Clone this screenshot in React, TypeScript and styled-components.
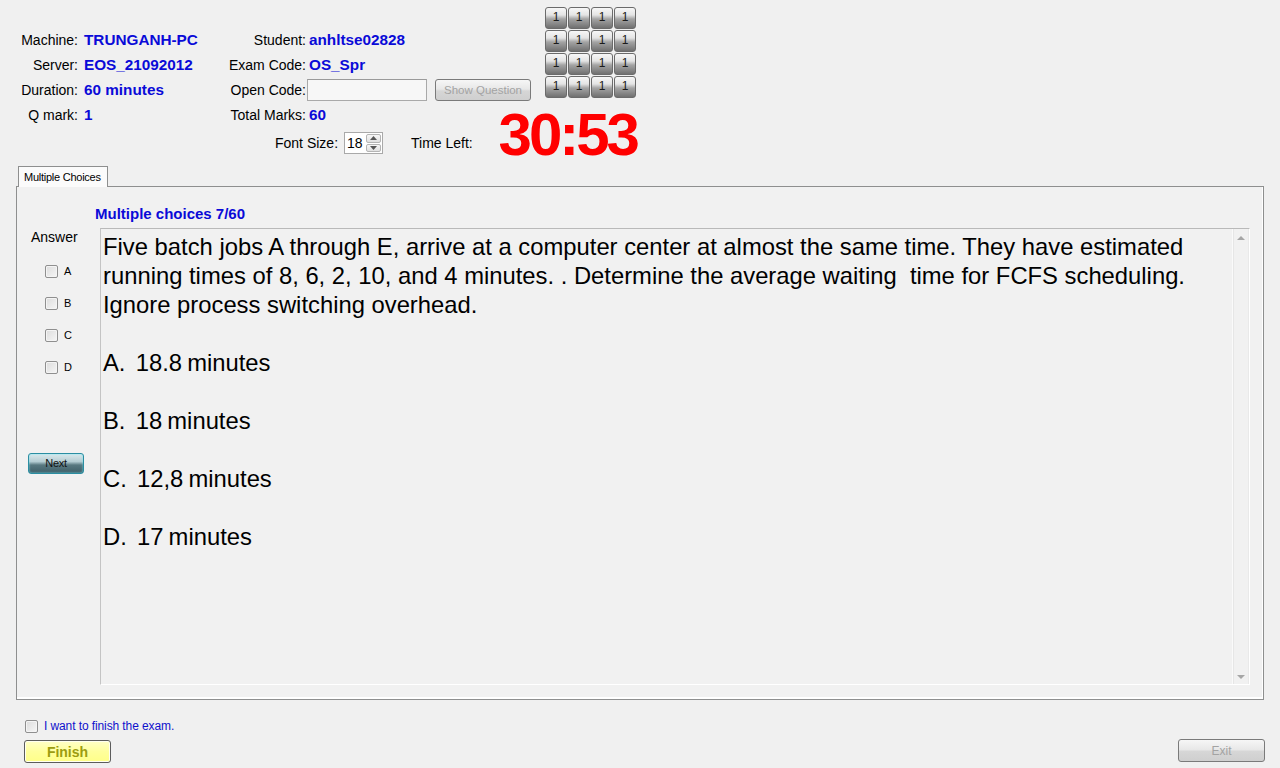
import React from "react";
import styled, { createGlobalStyle } from "styled-components";

const Global = createGlobalStyle`
  html, body { margin: 0; padding: 0; background: #f0f0f0; }
  body { font-family: "Liberation Sans", Arial, sans-serif; color: #000; }
`;

const Page = styled.div`
  width: 1280px;
  height: 768px;
  background: #f0f0f0;
  overflow: hidden;
  display: flex;
  flex-direction: column;
`;

const Header = styled.div`
  display: grid;
  grid-template-columns: 227px 273px 45px 92px;
  grid-template-rows: 20px repeat(4, 25px) 39px;
  padding-top: 7px;
  height: 159px;
`;

const Cell = styled.div<{ $col: string; $row: string }>`
  grid-column: ${(p) => p.$col};
  grid-row: ${(p) => p.$row};
  display: flex;
  align-items: center;
`;

const Label = styled.span<{ $w: number }>`
  width: ${(p) => p.$w}px;
  text-align: right;
  font-size: 14px;
  white-space: nowrap;
`;

const Value = styled.span<{ $gap: number }>`
  margin-left: ${(p) => p.$gap}px;
  font-size: 15.3px;
  font-weight: bold;
  color: #0a0ad8;
  white-space: nowrap;
`;

const TextInput = styled.div`
  margin-left: 1px;
  width: 118px;
  height: 20px;
  background: #f7f7f7;
  border: 1px solid #a9a9a9;
  border-top-color: #9a9a9a;
`;

const GrayButton = styled.div<{ $w: number; $h: number }>`
  width: ${(p) => p.$w}px;
  height: ${(p) => p.$h}px;
  box-sizing: border-box;
  border: 1px solid #7a7a7a;
  border-radius: 3px;
  background: linear-gradient(#f6f6f6 0%, #e8e8e8 45%, #d6d6d6 55%, #cfcfcf 100%);
  color: #a3a3a3;
  font-size: 11.5px;
  display: flex;
  align-items: center;
  justify-content: center;
`;

const ShowQuestion = styled(GrayButton)`
  margin-left: 8px;
  margin-top: 1px;
`;

const NumGrid = styled.div`
  grid-column: 4;
  grid-row: 1 / 5;
  display: grid;
  grid-template-columns: repeat(4, 22px);
  grid-auto-rows: 22px;
  gap: 1px;
  align-self: start;
`;

const NumButton = styled.div`
  box-sizing: border-box;
  border: 1px solid #6b6b6b;
  border-radius: 3px;
  background: linear-gradient(#f7f7f7 0%, #e4e4e4 35%, #a4a4a4 55%, #707070 100%);
  font-size: 12px;
  color: #1a1a1a;
  display: flex;
  align-items: center;
  justify-content: center;
  padding-bottom: 2px;
`;

const Timer = styled.div`
  grid-column: 3 / 5;
  grid-row: 5 / 7;
  justify-self: end;
  align-self: start;
  margin-top: 3px;
  font-size: 60px;
  line-height: 60px;
  font-weight: bold;
  color: #ff0000;
  letter-spacing: -3px;
`;

const FontRow = styled.div`
  grid-column: 1 / 3;
  grid-row: 6;
  display: flex;
  align-items: center;
  padding-left: 275px;
  height: 28px;
  margin-top: 2px;
  font-size: 14px;
`;

const Spinner = styled.div`
  margin-left: 6px;
  width: 39px;
  height: 22px;
  box-sizing: border-box;
  background: #fff;
  border: 1px solid #a9a9a9;
  display: flex;
  align-items: center;
  justify-content: space-between;
`;

const SpinValue = styled.span`
  padding-left: 2px;
  font-size: 14px;
`;

const SpinArrows = styled.div`
  width: 15px;
  height: 18px;
  margin-right: 1px;
  display: flex;
  flex-direction: column;
  gap: 1px;
`;

const SpinArrow = styled.div`
  flex: 1;
  border: 1px solid #b4b4b4;
  border-radius: 2px;
  background: linear-gradient(#f6f6f6, #e0e0e0);
  display: flex;
  align-items: center;
  justify-content: center;
`;

const TimeLeft = styled.span`
  margin-left: 28px;
`;

const TabStrip = styled.div`
  display: flex;
  padding-left: 18px;
  height: 20px;
`;

const Tab = styled.div`
  width: 90px;
  box-sizing: border-box;
  height: 21px;
  border: 1px solid #8e8f8f;
  border-bottom: none;
  background: #fbfbfb;
  font-size: 11px;
  letter-spacing: -0.25px;
  display: flex;
  align-items: center;
  padding-left: 5px;
  position: relative;
  z-index: 1;
`;

const Panel = styled.div`
  margin: 0 16px;
  height: 514px;
  box-sizing: border-box;
  border: 1px solid #8e8f8f;
  box-shadow: inset -1px -2px 0 #fff;
  background: #f1f1f1;
  display: flex;
  flex-direction: column;
  padding-top: 18px;
`;

const Title = styled.div`
  margin-left: 78px;
  font-size: 15px;
  line-height: 17px;
  font-weight: bold;
  color: #0a0ad8;
`;

const Body = styled.div`
  margin-top: 6px;
  display: flex;
`;

const LeftCol = styled.div`
  width: 83px;
  display: flex;
  flex-direction: column;
  padding-left: 11px;
  box-sizing: border-box;
`;

const AnswerLabel = styled.div`
  margin-left: 3px;
  font-size: 14px;
  line-height: 18px;
`;

const Choices = styled.div`
  margin-top: 9px;
  padding-left: 17px;
  display: flex;
  flex-direction: column;
`;

const ChoiceRow = styled.div`
  height: 32px;
  display: flex;
  align-items: center;
  gap: 6px;
  font-size: 11px;
`;

const Check = styled.span`
  display: inline-block;
  width: 13px;
  height: 13px;
  box-sizing: border-box;
  border: 1px solid #8f8f8f;
  border-radius: 2px;
  background: linear-gradient(135deg, #dcdcdc, #f6f6f6);
  box-shadow: inset 0 0 0 1px #f4f4f4;
`;

const NextButton = styled.div`
  margin-top: 70px;
  width: 56px;
  height: 21px;
  box-sizing: border-box;
  border: 1px solid #2b8ea2;
  border-radius: 3px;
  background: linear-gradient(#dbe9ec 0%, #b5cdd3 40%, #587880 58%, #3f5f68 100%);
  box-shadow: inset 0 0 2px #6ee6f6;
  font-size: 11px;
  letter-spacing: -0.3px;
  color: #111;
  display: flex;
  align-items: center;
  justify-content: center;
  padding-bottom: 1px;
`;

const QuestionBox = styled.div`
  flex: 1;
  margin-right: 13px;
  height: 457px;
  box-sizing: border-box;
  border-top: 1px solid #b9b9b9;
  border-left: 1px solid #c4c4c4;
  border-right: 1px solid #fff;
  border-bottom: 1px solid #fff;
  display: flex;
`;

const QuestionText = styled.div`
  flex: 1;
  padding: 3px 0 0 2px;
  font-size: 23.8px;
  line-height: 29px;
  white-space: pre-wrap;
  color: #000;
`;

const Para = styled.p<{ $gap?: boolean }>`
  margin: ${(p) => (p.$gap ? "29px" : "0")} 0 0 0;
  word-spacing: ${(p) => (p.$gap ? "-1.5px" : "0")};
`;

const ScrollBar = styled.div`
  width: 16px;
  border-left: 1px solid #fafafa;
  box-shadow: inset 1px 0 0 #e6e6e6, inset -1px 0 0 #e9e9e9;
  display: flex;
  flex-direction: column;
  justify-content: space-between;
  align-items: center;
  padding: 7px 0 5px;
`;

const Footer = styled.div`
  display: flex;
  flex-direction: column;
  padding-top: 18px;
`;

const FinishCheckRow = styled.div`
  height: 16px;
  display: flex;
  align-items: center;
  gap: 6px;
  padding-left: 25px;
  font-size: 12px;
  letter-spacing: -0.1px;
  color: #1111cc;
`;

const ButtonRow = styled.div`
  margin-top: 5px;
  display: flex;
  justify-content: space-between;
  align-items: flex-start;
  padding: 0 15px 0 24px;
`;

const FinishButton = styled.div`
  margin-top: 1px;
  width: 87px;
  height: 23px;
  box-sizing: border-box;
  border: 1px solid #5c5c5c;
  border-radius: 3px;
  background: linear-gradient(#ffffc8 0%, #ffff9c 50%, #ffff88 100%);
  box-shadow: inset 0 0 0 1px #fffff0;
  font-size: 14px;
  font-weight: bold;
  color: #9c9c10;
  display: flex;
  align-items: center;
  justify-content: center;
`;

const ExitButton = styled(GrayButton)`
  font-size: 12px;
`;

const Up = () => (
  <svg width="7" height="4" viewBox="0 0 7 4">
    <path d="M0 4 L3.5 0 L7 4 Z" fill="#555" />
  </svg>
);
const Down = () => (
  <svg width="7" height="4" viewBox="0 0 7 4">
    <path d="M0 0 L3.5 4 L7 0 Z" fill="#555" />
  </svg>
);
const ScrollUp = () => (
  <svg width="8" height="4" viewBox="0 0 8 4">
    <path d="M0 4 L4 0 L8 4 Z" fill="#a6a6a6" />
  </svg>
);
const ScrollDown = () => (
  <svg width="8" height="4" viewBox="0 0 8 4">
    <path d="M0 0 L4 4 L8 0 Z" fill="#a6a6a6" />
  </svg>
);

const info1 = [
  ["Machine:", "TRUNGANH-PC"],
  ["Server:", "EOS_21092012"],
  ["Duration:", "60 minutes"],
  ["Q mark:", "1"],
];

export default function App() {
  return (
    <Page>
      <Global />
      <Header>
        {info1.map(([l, v], i) => (
          <Cell key={l} $col="1" $row={String(i + 2)}>
            <Label $w={78}>{l}</Label>
            <Value $gap={6}>{v}</Value>
          </Cell>
        ))}
        <Cell $col="2" $row="2">
          <Label $w={79}>Student:</Label>
          <Value $gap={3}>anhltse02828</Value>
        </Cell>
        <Cell $col="2" $row="3">
          <Label $w={79}>Exam Code:</Label>
          <Value $gap={3}>OS_Spr</Value>
        </Cell>
        <Cell $col="2 / 4" $row="4">
          <Label $w={79}>Open Code:</Label>
          <TextInput />
          <ShowQuestion $w={96} $h={22}>Show Question</ShowQuestion>
        </Cell>
        <Cell $col="2" $row="5">
          <Label $w={79}>Total Marks:</Label>
          <Value $gap={3}>60</Value>
        </Cell>
        <NumGrid>
          {Array.from({ length: 16 }).map((_, i) => (
            <NumButton key={i}>1</NumButton>
          ))}
        </NumGrid>
        <FontRow>
          <span>Font Size:</span>
          <Spinner>
            <SpinValue>18</SpinValue>
            <SpinArrows>
              <SpinArrow>
                <Up />
              </SpinArrow>
              <SpinArrow>
                <Down />
              </SpinArrow>
            </SpinArrows>
          </Spinner>
          <TimeLeft>Time Left:</TimeLeft>
        </FontRow>
        <Timer>30:53</Timer>
      </Header>
      <TabStrip>
        <Tab>Multiple Choices</Tab>
      </TabStrip>
      <Panel>
        <Title>Multiple choices 7/60</Title>
        <Body>
          <LeftCol>
            <AnswerLabel>Answer</AnswerLabel>
            <Choices>
              {["A", "B", "C", "D"].map((c) => (
                <ChoiceRow key={c}>
                  <Check />
                  <span>{c}</span>
                </ChoiceRow>
              ))}
            </Choices>
            <NextButton>Next</NextButton>
          </LeftCol>
          <QuestionBox>
            <QuestionText>
              <Para>
                {
                  "Five batch jobs A through E, arrive at a computer center at almost the same time. They have estimated running times of 8, 6, 2, 10, and 4 minutes. . Determine the average waiting  time for FCFS scheduling. Ignore process switching overhead."
                }
              </Para>
              <Para $gap>{"A.  18.8 minutes"}</Para>
              <Para $gap>{"B.  18 minutes"}</Para>
              <Para $gap>{"C.  12,8 minutes"}</Para>
              <Para $gap>{"D.  17 minutes"}</Para>
            </QuestionText>
            <ScrollBar>
              <ScrollUp />
              <ScrollDown />
            </ScrollBar>
          </QuestionBox>
        </Body>
      </Panel>
      <Footer>
        <FinishCheckRow>
          <Check />
          <span>I want to finish the exam.</span>
        </FinishCheckRow>
        <ButtonRow>
          <FinishButton>Finish</FinishButton>
          <ExitButton $w={87} $h={23}>Exit</ExitButton>
        </ButtonRow>
      </Footer>
    </Page>
  );
}
